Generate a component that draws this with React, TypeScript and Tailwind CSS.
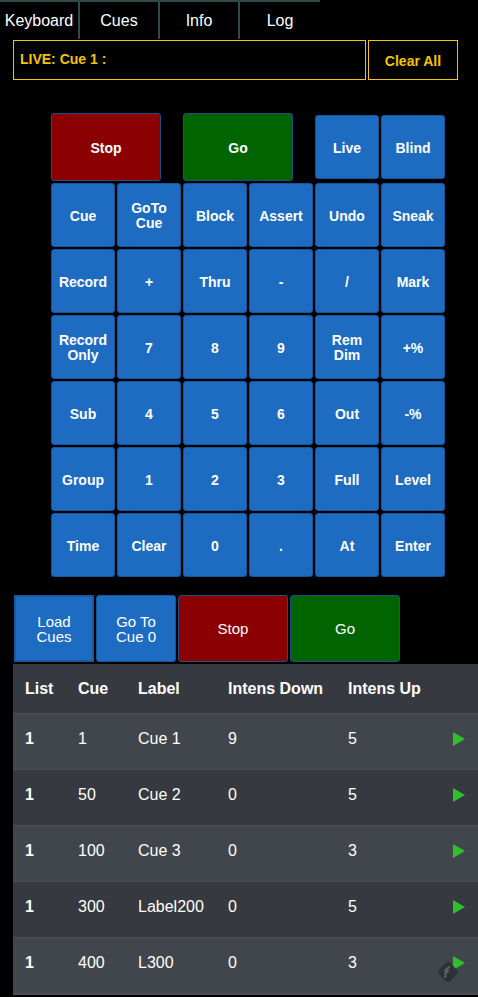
import React from 'react';

const keyRows: string[][] = [
    ['Cue', 'GoTo\nCue', 'Block', 'Assert', 'Undo', 'Sneak'],
    ['Record', '+', 'Thru', '-', '/', 'Mark'],
    ['Record\nOnly', '7', '8', '9', 'Rem\nDim', '+%'],
    ['Sub', '4', '5', '6', 'Out', '-%'],
    ['Group', '1', '2', '3', 'Full', 'Level'],
    ['Time', 'Clear', '0', '.', 'At', 'Enter'],
];

const cues = [
    { list: '1', cue: '1', label: 'Cue 1', down: '9', up: '5' },
    { list: '1', cue: '50', label: 'Cue 2', down: '0', up: '5' },
    { list: '1', cue: '100', label: 'Cue 3', down: '0', up: '3' },
    { list: '1', cue: '300', label: 'Label200', down: '0', up: '5' },
    { list: '1', cue: '400', label: 'L300', down: '0', up: '3' },
];

const tabs = ['Keyboard', 'Cues', 'Info', 'Log'];

const KeyButton = ({ text }: { text: string }) => (
    <button className="w-[64px] h-[64px] rounded-[3px] bg-[#1d6cc1] border border-[#14569c] text-white text-[14px] font-bold leading-[15px] flex items-center justify-center pt-[2px] whitespace-pre-line text-center">
        {text}
    </button>
);

const PlayIcon = () => (
    <svg width="12" height="14" viewBox="0 0 12 14">
        <polygon points="0,0 12,7 0,14" fill="#2fbf2f" />
    </svg>
);

export default function App() {
    return (
        <div className="relative w-[478px] min-h-[997px] bg-black overflow-hidden" style={{ fontFamily: '"Liberation Sans", Arial, sans-serif' }}>
            {/* tabs */}
            <div className="flex h-[39px]">
                {tabs.map((t, i) => (
                    <div
                        key={t}
                        className={`w-[80px] h-[39px] border-t-2 border-[#2f4a4a] flex items-center justify-center text-white text-[16px] ${i < 3 ? 'border-r-2' : ''}`}
                    >
                        {t}
                    </div>
                ))}
            </div>

            {/* live line */}
            <div className="flex gap-[2px] pl-[13px] pt-[1px]">
                <div className="w-[353px] h-[40px] border border-[#f5c400] flex items-center pl-[6px] pb-[1px] text-[#f5c400] text-[14px] font-bold">
                    LIVE: Cue 1 :
                </div>
                <button className="w-[90px] h-[40px] border border-[#f5c400] flex items-center justify-center pt-[2px] text-[#f5c400] text-[14px] font-bold">
                    Clear All
                </button>
            </div>

            {/* keypad */}
            <div className="pl-[51px] pt-[33px]">
                <div className="grid grid-cols-[repeat(6,64px)] gap-[2px]">
                    <div className="col-span-2 flex">
                        <button className="w-[110px] h-[68px] rounded-[3px] bg-[#8b0000] border border-[#1f4f86] text-white text-[14px] font-bold pt-[2px]">Stop</button>
                    </div>
                    <div className="col-span-2 flex">
                        <button className="w-[110px] h-[68px] rounded-[3px] bg-[#006400] border border-[#1f4f86] text-white text-[14px] font-bold pt-[2px]">Go</button>
                    </div>
                    <div className="flex items-center"><KeyButton text="Live" /></div>
                    <div className="flex items-center"><KeyButton text="Blind" /></div>
                    {keyRows.flat().map((k, i) => (
                        <KeyButton key={i} text={k} />
                    ))}
                </div>
            </div>

            {/* cue buttons */}
            <div className="flex gap-[2px] pl-[14px] pt-[18px]">
                <button className="w-[80px] h-[67px] bg-[#1d6cc1] border-2 border-[#17589e] text-white text-[15px] leading-[15px] whitespace-pre-line">{'Load\nCues'}</button>
                <button className="w-[80px] h-[67px] rounded-[3px] bg-[#1d6cc1] border border-[#14569c] text-white text-[15px] leading-[15px] whitespace-pre-line">{'Go To\nCue 0'}</button>
                <button className="w-[110px] h-[67px] rounded-[3px] bg-[#8b0000] border border-[#1f4f86] text-white text-[15px] pt-[2px]">Stop</button>
                <button className="w-[110px] h-[67px] rounded-[3px] bg-[#006400] border border-[#1f4f86] text-white text-[15px] pt-[2px]">Go</button>
            </div>

            {/* cue table */}
            <div className="ml-[13px] mt-[2px] w-[465px] text-white text-[16px]">
                <div className="flex items-center h-[49px] bg-[#363940] font-bold">
                    <div className="w-[65px] pl-[12px]">List</div>
                    <div className="w-[60px]">Cue</div>
                    <div className="w-[90px]">Label</div>
                    <div className="w-[120px]">Intens Down</div>
                    <div className="w-[105px]">Intens Up</div>
                </div>
                {cues.map((c, i) => (
                    <div
                        key={i}
                        className={`flex items-center h-[56px] pb-[5px] border-t border-[#4a4e55] ${i % 2 === 0 ? 'bg-[#41454c]' : 'bg-[#363940]'}`}
                    >
                        <div className="w-[65px] pl-[12px] font-bold">{c.list}</div>
                        <div className="w-[60px]">{c.cue}</div>
                        <div className="w-[90px]">{c.label}</div>
                        <div className="w-[120px]">{c.down}</div>
                        <div className="w-[105px]">{c.up}</div>
                        <div className="flex items-center"><PlayIcon /></div>
                    </div>
                ))}
                <div className="h-[2px] bg-[#4a4e55]" />
            </div>

            {/* floating feedback badge */}
            <div className="absolute left-[436px] top-[960px] w-[24px] h-[24px]">
                <svg width="24" height="24" viewBox="0 0 24 24">
                    <rect x="4" y="4" width="16" height="16" rx="4" transform="rotate(45 12 12)" fill="#2c2f34" fillOpacity="0.9" />
                    <path d="M9 11 L13 7 M9 14 L12 11 M9 17 L10 16" stroke="#5d6167" strokeWidth="2" strokeLinecap="round" />
                </svg>
            </div>
        </div>
    );
}
